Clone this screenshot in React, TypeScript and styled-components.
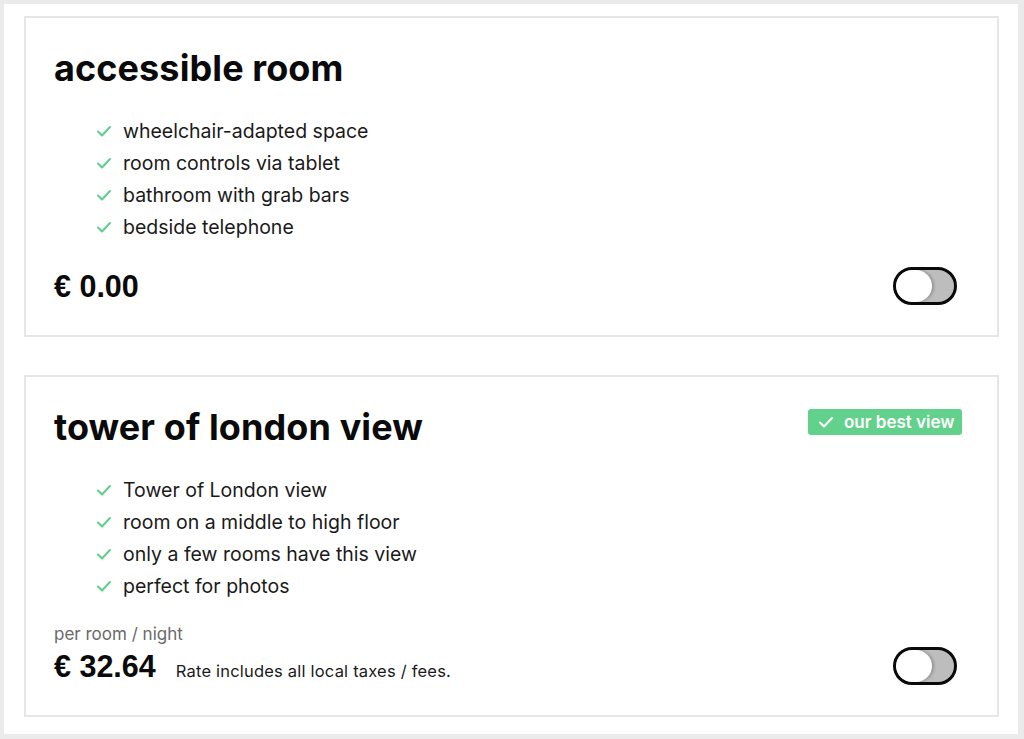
import React from "react";
import styled, { createGlobalStyle } from "styled-components";

const GlobalStyle = createGlobalStyle`
  html, body {
    margin: 0;
    padding: 0;
    background: #ebebeb;
  }
  body {
    padding: 4px 6px 5px 4px;
    font-family: Inter, "Liberation Sans", Arial, sans-serif;
    color: #111;
  }
`;

const Panel = styled.div`
  background: #ffffff;
  width: 1014px;
  min-height: 730px;
  box-sizing: border-box;
  padding: 12px 19px 16px 20px;
  display: flex;
  flex-direction: column;
  gap: 38px;
`;

const Card = styled.section`
  border: 2px solid #e6e6e6;
  padding: 28px 40px 30px 28px;
  display: flex;
  flex-direction: column;
`;

const TitleRow = styled.div`
  display: flex;
  justify-content: space-between;
  align-items: flex-start;
`;

const Title = styled.h2`
  margin: 0;
  font-family: Inter, "Liberation Sans", sans-serif;
  font-weight: 700;
  font-size: 36px;
  line-height: 44px;
  letter-spacing: 0.1px;
  color: #0a0a0a;
`;

const Badge = styled.div`
  margin-top: 4px;
  margin-right: -5px;
  height: 26px;
  width: 154px;
  box-sizing: border-box;
  background: #62d18c;
  border-radius: 3px;
  color: #fff;
  display: flex;
  align-items: center;
  gap: 10px;
  padding-left: 10px;
  font-family: Inter, "Liberation Sans", sans-serif;
  font-weight: 600;
  font-size: 17px;
`;

const List = styled.ul`
  list-style: none;
  margin: 25px 0 0 0;
  padding: 0 0 0 42px;
`;

const Item = styled.li`
  display: flex;
  align-items: center;
  height: 32px;
  font-size: 19.5px;
  color: #1a1a1a;
  gap: 11px;
`;

const Check = ({ color, size }: { color: string; size: number }) => (
  <svg width={size} height={size} viewBox="0 0 16 16" fill="none">
    <path d="M2 8.5 L6 12.5 L14 4" stroke={color} strokeWidth="2" strokeLinecap="round" strokeLinejoin="round" />
  </svg>
);

const PerUnit = styled.div`
  margin-top: 22px;
  height: 20px;
  line-height: 20px;
  font-size: 17px;
  color: #6a6a6a;
`;

const PriceRow = styled.div<{ $gapTop: number }>`
  margin-top: ${(p) => p.$gapTop}px;
  display: flex;
  align-items: center;
  justify-content: space-between;
  height: 38px;
`;

const PriceGroup = styled.div`
  display: flex;
  align-items: baseline;
  gap: 20px;
`;

const Price = styled.span`
  font-family: "Liberation Sans", Arial, sans-serif;
  font-weight: 700;
  font-size: 30.5px;
  color: #0a0a0a;
`;

const Note = styled.span`
  font-size: 16.5px;
  letter-spacing: 0.2px;
  color: #1a1a1a;
`;

const Toggle = styled.div`
  width: 64px;
  height: 38px;
  box-sizing: border-box;
  border: 3px solid #0a0a0a;
  border-radius: 19px;
  background: #bdbdbd;
  overflow: hidden;
`;

const Knob = styled.div`
  width: 36px;
  height: 32px;
  border-radius: 16px;
  background: #fff;
  box-shadow: 2px 0 3px rgba(0, 0, 0, 0.22);
`;

type Room = {
  title: string;
  features: string[];
  price: string;
  badge?: string;
  perUnit?: string;
  note?: string;
};

const rooms: Room[] = [
  {
    title: "accessible room",
    features: [
      "wheelchair-adapted space",
      "room controls via tablet",
      "bathroom with grab bars",
      "bedside telephone",
    ],
    price: "€ 0.00",
  },
  {
    title: "tower of london view",
    badge: "our best view",
    features: [
      "Tower of London view",
      "room on a middle to high floor",
      "only a few rooms have this view",
      "perfect for photos",
    ],
    perUnit: "per room / night",
    price: "€ 32.64",
    note: "Rate includes all local taxes / fees.",
  },
];

export default function App() {
  return (
    <>
      <GlobalStyle />
      <Panel>
        {rooms.map((r) => (
          <Card key={r.title}>
            <TitleRow>
              <Title>{r.title}</Title>
              {r.badge && (
                <Badge>
                  <Check color="#ffffff" size={16} />
                  {r.badge}
                </Badge>
              )}
            </TitleRow>
            <List>
              {r.features.map((f) => (
                <Item key={f}>
                  <Check color="#5ccf89" size={16} />
                  {f}
                </Item>
              ))}
            </List>
            {r.perUnit && <PerUnit>{r.perUnit}</PerUnit>}
            <PriceRow $gapTop={r.perUnit ? 3 : 24}>
              <PriceGroup>
                <Price>{r.price}</Price>
                {r.note && <Note>{r.note}</Note>}
              </PriceGroup>
              <Toggle>
                <Knob />
              </Toggle>
            </PriceRow>
          </Card>
        ))}
      </Panel>
    </>
  );
}
